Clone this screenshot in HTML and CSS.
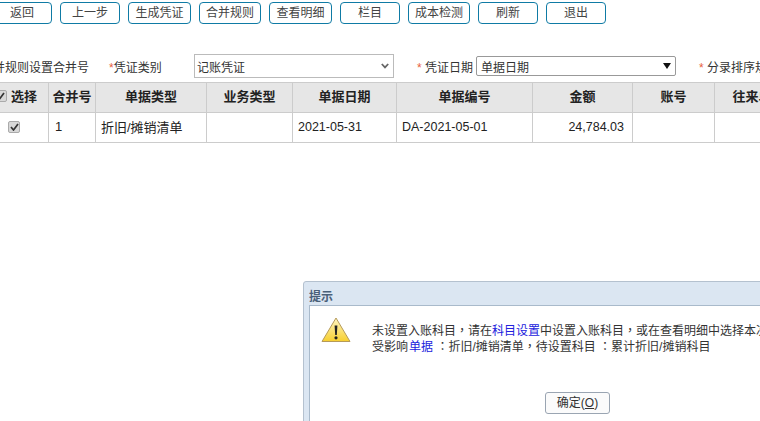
FILE: index.html
```html
<!DOCTYPE html>
<html>
<head>
    <title>凭证</title>
    <link rel="stylesheet" href="styles.css">
</head>
<body>
    <div id="page">
        <div class="toolbar">
            <div class="btn w60">返回</div>
            <div class="btn w60">上一步</div>
            <div class="btn w63">生成凭证</div>
            <div class="btn w62">合并规则</div>
            <div class="btn w63">查看明细</div>
            <div class="btn w60">栏目</div>
            <div class="btn w62">成本检测</div>
            <div class="btn w60">刷新</div>
            <div class="btn w60">退出</div>
        </div>
        <div class="filters">
            <span class="merge-label">合并规则设置合并号</span>
            <span class="field-label type-label"><i>*</i>凭证类别</span>
            <div class="type-select">
                <span>记账凭证</span>
                <svg width="8" height="6" viewBox="0 0 8 6"><path d="M.8 1L4 4.4 7.2 1" fill="none" stroke="#666" stroke-width="1.8"/></svg>
            </div>
            <span class="field-label date-label"><i>*</i> 凭证日期</span>
            <div class="date-select">
                <span>单据日期</span>
                <b class="arrow"></b>
            </div>
            <span class="field-label sort-label"><i>*</i> 分录排序规则</span>
        </div>
        <div class="grid">
            <div class="cell head c1"><span class="check"><svg width="9" height="8" viewBox="0 0 9 8"><path d="M1 4l2.5 3L8 1" fill="none" stroke="#333" stroke-width="1.7"/></svg></span>选择</div>
            <div class="cell head c2">合并号</div>
            <div class="cell head c3">单据类型</div>
            <div class="cell head c4">业务类型</div>
            <div class="cell head c5">单据日期</div>
            <div class="cell head c6">单据编号</div>
            <div class="cell head c7">金额</div>
            <div class="cell head c8">账号</div>
            <div class="cell head c9">往来单位</div>

            <div class="cell c1 center"><span class="check"><svg width="9" height="8" viewBox="0 0 9 8"><path d="M1 4l2.5 3L8 1" fill="none" stroke="#333" stroke-width="1.7"/></svg></span></div>
            <div class="cell c2">1</div>
            <div class="cell c3">折旧/摊销清单</div>
            <div class="cell c4"></div>
            <div class="cell c5">2021-05-31</div>
            <div class="cell c6">DA-2021-05-01</div>
            <div class="cell c7 right">24,784.03</div>
            <div class="cell c8"></div>
            <div class="cell c9"></div>
        </div>
    </div>

    <div id="dialog">
        <div class="dialog-title">提示</div>
        <div class="dialog-body">
            <div class="dialog-main">
                <svg class="warn" width="30" height="26" viewBox="0 0 30 26">
                    <defs>
                        <linearGradient id="warnfill" x1="0" y1="0" x2="0" y2="1">
                            <stop offset="0" stop-color="#fff6c4"/>
                            <stop offset="1" stop-color="#f7cf2e"/>
                        </linearGradient>
                    </defs>
                    <path d="M15 1L29 24.5H1z" fill="url(#warnfill)" stroke="#b59a5a" stroke-linejoin="round"/>
                    <path d="M13.6 8.5h2.8l-.6 9.5h-1.6z" fill="#222"/>
                    <circle cx="15" cy="20.8" r="1.6" fill="#222"/>
                </svg>
                <div class="msg">
                    <div class="msg-line">未设置入账科目<span class="pc">，</span>请在<a>科目设置</a>中设置入账科目<span class="pc">，</span>或在查看明细中选择本次不生成凭证的单据</div>
                    <div class="msg-line">受影响<a class="doc-link">单据</a> <span class="pc">：</span>折旧/摊销清单<span class="pc">，</span>待设置科目 <span class="pc">：</span>累计折旧/摊销科目</div>
                </div>
            </div>
            <div class="ok-btn">确定(<u>O</u>)</div>
        </div>
    </div>
</body>
</html>
```

FILE: styles.css
```css
html, body{
    margin:0;
    padding:0;
    height:421px;
    overflow:hidden;
    background-color:white;
}

body{
    position:relative;
    font-family:"Liberation Sans", "Noto Sans CJK SC", Arial, sans-serif;
    font-size:12px;
    color:#222;
}

#page{
    width:1000px;
    margin-left:-8px;
}

.toolbar{
    display:flex;
    gap:8px;
    padding-top:2px;
    height:22px;
}

.btn{
    box-sizing:border-box;
    height:22px;
    line-height:20px;
    text-align:center;
    color:#444;
    border:1px solid #0f7ba5;
    border-radius:4px;
    background-color:white;
}

.w60{ width:60px; }
.w62{ width:62px; }
.w63{ width:63px; }

.filters{
    display:flex;
    align-items:center;
    height:24px;
    margin-top:30px;
    color:#333;
    white-space:nowrap;
}

.filters i{
    font-style:normal;
    color:#e8603c;
}

.merge-label{
    margin-left:-11px;
    margin-right:20px;
}

.type-label{
    width:85px;
}

.type-select{
    box-sizing:border-box;
    display:flex;
    align-items:center;
    justify-content:space-between;
    width:200px;
    height:24px;
    padding:0 4px 0 2px;
    border:1px solid #bbb;
    background-color:white;
}

.date-label{
    margin-left:23px;
    width:59px;
}

.date-select{
    box-sizing:border-box;
    display:flex;
    align-items:center;
    justify-content:space-between;
    width:200px;
    height:20px;
    padding:0 4px 0 4px;
    border:1px solid #999;
    border-radius:2px;
    background-color:white;
}

.arrow{
    width:0;
    height:0;
    border-left:4px solid transparent;
    border-right:4px solid transparent;
    border-top:6px solid #111;
}

.sort-label{
    margin-left:23px;
}

.grid{
    display:grid;
    grid-template-columns:57px 47px 111px 86px 104px 136px 100px 82px 88px;
    grid-template-rows:30px 29px;
    margin-top:4px;
    border-top:1px solid #ccc;
    border-bottom:1px solid #ccc;
    width:811px;
    font-size:13px;
}

.cell{
    box-sizing:border-box;
    display:flex;
    align-items:center;
    padding:0 5px 2px;
    border-right:1px solid #ccc;
    white-space:nowrap;
    overflow:hidden;
}

.c2{ padding-left:6px; }
.c3{ padding-bottom:3px; }
.c5, .c6, .c7{ font-size:12.5px; }

.head{
    justify-content:center;
    padding:0 0 4px;
    font-weight:bold;
    font-size:13px;
    color:#222;
    background-color:#e6e6e6;
    border-bottom:1px solid #ccc;
}

.c1.head{
    justify-content:flex-end;
    padding-right:11px;
}

.center{
    justify-content:flex-end;
    padding-right:28px;
}

.right{
    justify-content:flex-end;
    padding-right:8px;
}

.check{
    box-sizing:border-box;
    display:flex;
    align-items:center;
    justify-content:center;
    width:12px;
    height:12px;
    border:1px solid #aaa;
    border-radius:2px;
    background-color:#d8d8d8;
}

.head .check{
    margin-right:4px;
}

#dialog{
    position:absolute;
    left:303px;
    top:281px;
    width:600px;
    height:160px;
    box-sizing:border-box;
    border:1px solid #b4c1cf;
    border-radius:3px;
    padding:0 5px;
    background-color:#dbe6f2;
}

.dialog-title{
    height:23px;
    line-height:31px;
    font-weight:bold;
    color:#4a6079;
}

.dialog-body{
    height:136px;
    border:1px solid #a9bacb;
    background-color:white;
}

.dialog-main{
    display:flex;
    height:73px;
}

.warn{
    margin:11px 0 0 11px;
}

.msg{
    margin-left:21px;
    padding-top:16px;
    white-space:nowrap;
}

.msg-line{
    height:16px;
    line-height:16px;
    color:#333;
}

.msg a{
    color:#2222dd;
}

.doc-link{
    margin-left:1px;
}

.pc{
    font-family:"Noto Sans CJK TC", sans-serif;
}

.ok-btn{
    box-sizing:border-box;
    width:65px;
    height:22px;
    margin:13px 0 0 235px;
    line-height:20px;
    text-align:center;
    color:#333;
    border:1px solid #9aa5b2;
    border-radius:3px;
    background-color:#fbfbfb;
}
```
